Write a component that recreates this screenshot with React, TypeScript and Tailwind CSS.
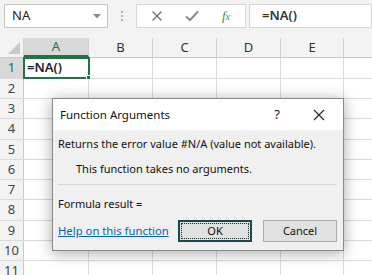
import React from "react";

const cols = ["A", "B", "C", "D", "E"];
const colW = [65, 64, 64, 64, 63];
const rowH = [21, 20, 20, 21, 20, 20, 20, 21, 20, 20, 20];

export default function App() {
  return (
    <div
      className="relative w-[372px] h-[275px] overflow-hidden bg-white text-[#222]"
      style={{ fontFamily: '"Noto Sans", "Open Sans", sans-serif' }}
    >
      {/* top formula bar */}
      <div className="h-[38px] bg-[#f3f3f3] flex items-start pt-[4px]">
        <div className="ml-[4px] w-[104px] h-[24px] bg-white border border-[#c6c6c6] flex items-center pl-[7px] pr-[6px]">
          <span className="text-[13px] flex-1">NA</span>
          <svg width="8" height="5" viewBox="0 0 8 5">
            <path d="M0 0 H8 L4 4.5 Z" fill="#8a8a8a" />
          </svg>
        </div>
        <div className="w-[28px] h-[24px] flex flex-col items-center justify-center gap-[2px]">
          <span className="w-[2px] h-[2px] bg-[#b5b5b5]" />
          <span className="w-[2px] h-[2px] bg-[#b5b5b5]" />
          <span className="w-[2px] h-[2px] bg-[#b5b5b5]" />
        </div>
        <div className="w-[110px] h-[24px] bg-white border border-[#d6d6d6] flex items-center">
          <div className="w-[40px] flex justify-center">
            <svg width="12" height="12" viewBox="0 0 12 12">
              <path d="M1.5 1.5 L10.5 10.5 M10.5 1.5 L1.5 10.5" stroke="#707070" strokeWidth="1.4" />
            </svg>
          </div>
          <div className="w-[30px] flex justify-center">
            <svg width="14" height="12" viewBox="0 0 14 12">
              <path d="M1 6.5 L5 10 L13 1.5" stroke="#8a8a8a" strokeWidth="2" fill="none" />
            </svg>
          </div>
          <div className="flex-1 flex justify-center">
            <span
              className="text-[13px] italic text-[#3c8a5a]"
              style={{ fontFamily: '"Liberation Serif", serif' }}
            >
              f<span className="text-[10px]">x</span>
            </span>
          </div>
        </div>
        <div className="ml-[3px] flex-1 h-[24px] bg-white border border-[#d6d6d6] flex items-center pl-[12px]">
          <span className="text-[13px] font-semibold text-[#333]">=NA()</span>
        </div>
      </div>

      {/* header row */}
      <div className="flex h-[20px] bg-[#f3f3f3] border-b border-[#c8c8c8]">
        <div className="w-[24px] border-r border-[#d0d0d0] relative">
          <svg className="absolute right-[3px] bottom-[3px]" width="12" height="12" viewBox="0 0 12 12">
            <path d="M12 0 V12 H0 Z" fill="#c8c8c8" />
          </svg>
        </div>
        {cols.map((c, i) => (
          <div
            key={c}
            style={{ width: colW[i] }}
            className={`flex items-center justify-center text-[13px] border-r border-[#d0d0d0] ${
              i === 0 ? "bg-[#d8d8d8] text-[#217346] border-b-2 border-b-[#217346]" : "text-[#333]"
            }`}
          >
            {c}
          </div>
        ))}
        <div className="flex-1" />
      </div>

      {/* rows */}
      {rowH.map((h, r) => (
        <div key={r} className="flex border-b border-[#dadada]" style={{ height: h }}>
          <div
            className={`w-[24px] flex items-center justify-center text-[13px] border-r border-[#c8c8c8] ${
              r === 0 ? "bg-[#d8d8d8] text-[#217346]" : "bg-[#f3f3f3] text-[#444]"
            }`}
          >
            {r + 1}
          </div>
          {cols.map((c, i) => (
            <div
              key={c}
              style={{ width: colW[i] }}
              className="border-r border-[#dadada] relative"
            >
              {r === 0 && i === 0 && (
                <div className="absolute -left-[1px] -top-[1px] w-[67px] h-[22px] border-2 border-[#217346] flex items-center pl-[2px]">
                  <span className="text-[13px] font-semibold text-[#222]">=NA()</span>
                  <span className="absolute -right-[3px] -bottom-[3px] w-[5px] h-[5px] bg-[#217346] border border-white" />
                </div>
              )}
            </div>
          ))}
          <div className="flex-1" />
        </div>
      ))}

      {/* dialog */}
      <div className="absolute left-[52px] top-[98px] w-[292px] h-[153px] border border-[#8a8a8a] bg-[#f0f0f0] shadow-[0_2px_14px_rgba(0,0,0,0.35)] flex flex-col text-[11px] text-[#111] whitespace-nowrap">
        <div className="h-[31px] bg-white flex items-center pl-[7px] pr-[18px]">
          <span className="flex-1 text-[11.5px]">Function Arguments</span>
          <span className="text-[13px] mr-[33px]">?</span>
          <svg width="12" height="12" viewBox="0 0 12 12">
            <path d="M1 1 L11 11 M11 1 L1 11" stroke="#222" strokeWidth="1.1" />
          </svg>
        </div>
        <div className="flex-1 flex flex-col px-[5px] pt-[5px]">
          <div className="h-[18px] flex items-center">Returns the error value #N/A (value not available).</div>
          <div className="h-[18px] mt-[7px] flex items-center pl-[18px]">This function takes no arguments.</div>
          <div className="mt-[6px] h-px bg-[#d8d8d8] mr-[1px]" />
          <div className="h-[18px] mt-[10px] flex items-center">Formula result =</div>
          <div className="mt-[7px] flex items-center">
            <span className="flex-1 text-[#0563c1] underline text-[11.3px]">Help on this function</span>
            <div className="w-[74px] h-[22px] border-2 border-[#1c4a4a] bg-[#e1e1e1] p-[1px]">
              <div className="w-full h-full border border-dotted border-[#222] flex items-center justify-center">OK</div>
            </div>
            <div className="ml-[11px] mr-[1px] w-[74px] h-[22px] border border-[#adadad] bg-[#e1e1e1] flex items-center justify-center">
              Cancel
            </div>
          </div>
        </div>
      </div>
    </div>
  );
}
